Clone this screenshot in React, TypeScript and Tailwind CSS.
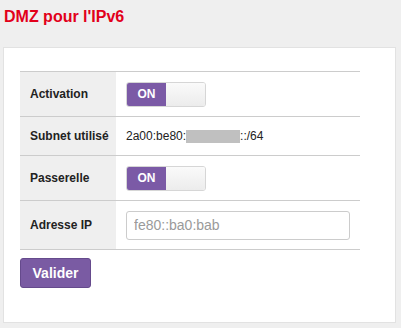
import React from "react"

const Toggle = () => (
    <div className="flex h-[25px] w-[80px] overflow-hidden rounded-[3px] border border-[#d6d6d6]">
        <div className="flex w-[39px] items-center justify-center bg-[#7b5aa6] text-[12px] font-bold text-white">ON</div>
        <div className="flex-1 bg-gradient-to-b from-[#fafafa] to-[#ececec]"></div>
    </div>
)

type Row = { label: string; height: string; content: React.ReactNode }

const rows: Row[] = [
    { label: "Activation", height: "h-[45px]", content: <Toggle /> },
    {
        label: "Subnet utilisé",
        height: "h-[39px]",
        content: (
            <span className="flex items-center text-[12px] text-[#222]">
                2a00:be80:<span className="inline-block h-[13px] w-[54px] bg-[#c0c0c0]"></span>::/64
            </span>
        ),
    },
    { label: "Passerelle", height: "h-[45px]", content: <Toggle /> },
    {
        label: "Adresse IP",
        height: "h-[49px]",
        content: (
            <input
                placeholder="fe80::ba0:bab"
                className="h-[29px] w-[224px] rounded-[3px] border border-[#cccccc] px-[7px] text-[14px] text-[#333] placeholder:text-[#9a9a9a] outline-none"
            />
        ),
    },
]

export default function App() {
    return (
        <div className="h-[328px] w-[401px] bg-[#efefef] px-[3px] pt-[8px] font-['Liberation_Sans',Arial,sans-serif]">
            <h1 className="pl-[1px] text-[16px] font-bold leading-[18px] text-[#e2001a]">DMZ pour l'IPv6</h1>
            <div className="mt-[21px] h-[276px] w-[393px] border border-[#e2e2e2] bg-white pl-[16px] pt-[23px]">
                <div className="w-[340px] border-t border-[#cccccc]">
                    {rows.map((r) => (
                        <div key={r.label} className={`flex border-b border-[#cccccc] ${r.height}`}>
                            <div className="flex w-[96px] items-center bg-[#efefef] pl-[10px] text-[12px] font-bold text-[#222]">{r.label}</div>
                            <div className="flex flex-1 items-center pl-[10px]">{r.content}</div>
                        </div>
                    ))}
                </div>
                <button className="mt-[8px] h-[30px] w-[71px] rounded-[3px] border border-[#654a8c] bg-[#7a5ba3] text-[14px] font-bold text-white">Valider</button>
            </div>
        </div>
    )
}
